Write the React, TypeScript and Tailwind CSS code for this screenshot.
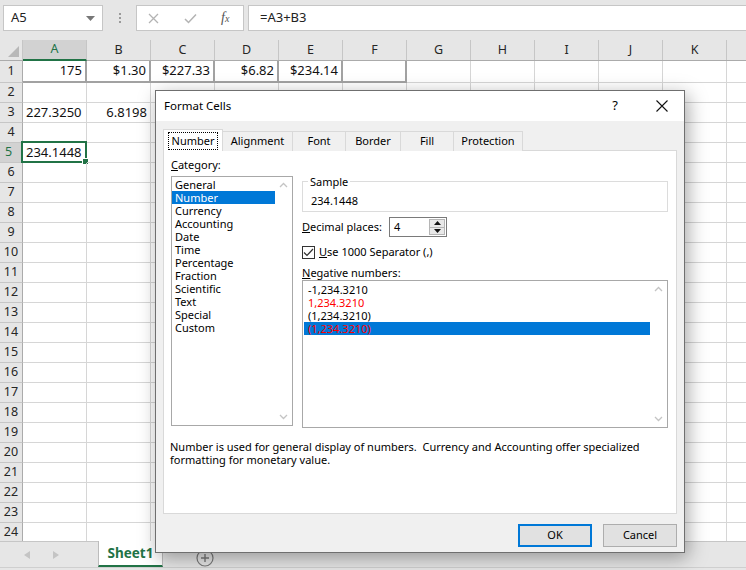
import React from "react";

const COLS = ["A", "B", "C", "D", "E", "F", "G", "H", "I", "J", "K", "L"];
const ROWS = Array.from({ length: 24 }, (_, i) => i + 1);

const cells: Record<string, { v: string; right?: boolean }> = {
  A1: { v: "175", right: true },
  B1: { v: "$1.30", right: true },
  C1: { v: "$227.33", right: true },
  D1: { v: "$6.82", right: true },
  E1: { v: "$234.14", right: true },
  A3: { v: "227.3250" },
  B3: { v: "6.8198", right: true },
  A5: { v: "234.1448" },
};

const categories = [
  "General", "Number", "Currency", "Accounting", "Date", "Time",
  "Percentage", "Fraction", "Scientific", "Text", "Special", "Custom",
];

function Chevron({ up }: { up?: boolean }) {
  return (
    <svg width="9" height="6" viewBox="0 0 9 6" className="block">
      <path d={up ? "M1 5 L4.5 1.5 L8 5" : "M1 1 L4.5 4.5 L8 1"} fill="none" stroke="#c4c4c4" strokeWidth="1.3" />
    </svg>
  );
}

function ScrollBar() {
  return (
    <div className="w-[17px] shrink-0 flex flex-col items-center justify-between py-[5px]">
      <Chevron up />
      <Chevron />
    </div>
  );
}

function FormulaBar() {
  return (
    <div className="h-[40px] bg-[#e6e6e6] flex items-start pt-[5px]">
      <div className="ml-[3px] w-[100px] h-[26px] bg-white border border-[#c6c6c6] flex items-center pl-[7px] pr-[7px] text-[13px] text-[#222]">
        A5
        <svg width="9" height="5" viewBox="0 0 9 5" className="ml-auto">
          <path d="M0 0 H9 L4.5 5 Z" fill="#777" />
        </svg>
      </div>
      <div className="w-[33px] h-[26px] flex flex-col items-center justify-center gap-[2px]">
        <span className="w-[2px] h-[2px] bg-[#9a9a9a]" />
        <span className="w-[2px] h-[2px] bg-[#9a9a9a]" />
        <span className="w-[2px] h-[2px] bg-[#9a9a9a]" />
      </div>
      <div className="w-[108px] h-[26px] bg-white border border-[#c6c6c6] flex items-center pl-[11px]">
        <svg width="11" height="11" viewBox="0 0 11 11">
          <path d="M1 1 L10 10 M10 1 L1 10" stroke="#b3b3b3" strokeWidth="1.3" />
        </svg>
        <svg width="13" height="11" viewBox="0 0 13 11" className="ml-[25px]">
          <path d="M1 6 L4.5 9.5 L12 1.5" fill="none" stroke="#b3b3b3" strokeWidth="1.5" />
        </svg>
        <span className="ml-[24px] font-['Liberation_Serif',serif] italic text-[14px] text-[#555] leading-none">
          f<span className="text-[10px]">x</span>
        </span>
      </div>
      <div className="ml-[4px] flex-1 h-[26px] bg-white border border-[#c6c6c6] border-r-0 flex items-center pl-[11px] text-[13px] text-[#222]">
        =A3+B3
      </div>
    </div>
  );
}

function HeaderRow() {
  return (
    <div className="flex h-[21px] bg-[#e6e6e6] border-b border-[#ababab] shrink-0">
      <div className="w-[23px] shrink-0 border-r border-[#c6c6c6] flex items-end justify-end pr-[3px] pb-[3px]">
        <svg width="11" height="11" viewBox="0 0 11 11">
          <path d="M11 0 V11 H0 Z" fill="#b8b8b8" />
        </svg>
      </div>
      {COLS.map((c) => (
        <div
          key={c}
          className={
            c === "A"
              ? "w-[64px] shrink-0 bg-[#d2d2d2] border-r border-[#c6c6c6] border-b-2 border-b-[#217346] -mb-px flex items-center justify-center text-[12.5px] text-[#217346]"
              : "w-[64px] shrink-0 border-r border-[#c6c6c6] flex items-center justify-center text-[12.5px] text-[#262626]"
          }
        >
          {c === "L" ? "" : c}
        </div>
      ))}
    </div>
  );
}

function SheetRow({ r }: { r: number }) {
  const first = r === 1;
  return (
    <div className={first ? "flex h-[22px] shrink-0" : "flex h-[20px] shrink-0"}>
      <div
        className={
          r === 5
            ? "w-[23px] shrink-0 bg-[#d2d2d2] border-r-2 border-r-[#217346] border-b border-b-[#c6c6c6] flex items-center pl-[5px] text-[12.5px] text-[#217346]"
            : "w-[23px] shrink-0 bg-[#e6e6e6] border-r border-r-[#ababab] border-b border-b-[#c6c6c6] flex items-center justify-center text-[12.5px] text-[#262626]"
        }
      >
        {r}
      </div>
      {COLS.map((c, i) => {
        const cell = cells[c + r];
        const boxed = first && i < 6;
        return (
          <div
            key={c}
            className={
              (boxed
                ? "border-r-2 border-b-2 border-[#a2a2a2] "
                : "border-r border-b border-[#d6d6d6] ") +
              "relative w-[64px] shrink-0 flex items-center px-[3px] text-[13px] text-[#111] whitespace-nowrap " +
              (cell?.right ? "justify-end" : "justify-start")
            }
          >
            {cell?.v}
            {c === "A" && r === 5 && (
              <div className="absolute -left-[2px] -top-[2px] -right-px -bottom-px border-2 border-[#217346]">
                <span className="absolute -right-[4px] -bottom-[4px] w-[5px] h-[5px] bg-[#217346] border border-white box-content" />
              </div>
            )}
          </div>
        );
      })}
    </div>
  );
}

function TabBar() {
  return (
    <div className="h-[29px] bg-[#e6e6e6] border-t border-[#c6c6c6] flex flex-col">
      <div className="h-[25px] flex items-stretch">
        <div className="w-[98px] flex items-center pl-[24px] gap-[23px]">
          <svg width="6" height="8" viewBox="0 0 6 8">
            <path d="M6 0 V8 L0 4 Z" fill="#c4c4c4" />
          </svg>
          <svg width="6" height="8" viewBox="0 0 6 8">
            <path d="M0 0 V8 L6 4 Z" fill="#c4c4c4" />
          </svg>
        </div>
        <div className="-mt-px w-[65px] bg-white border-x border-[#bcbcbc] border-b-2 border-b-[#217346] flex items-center justify-center font-bold text-[13.5px] text-[#217346]">
          Sheet1
        </div>
        <div className="ml-[33px] flex items-center pt-[6px]">
          <svg width="18" height="18" viewBox="0 0 18 18">
            <circle cx="9" cy="9" r="8" fill="none" stroke="#7a7a7a" strokeWidth="1.2" />
            <path d="M9 5 V13 M5 9 H13" stroke="#7a7a7a" strokeWidth="1.4" />
          </svg>
        </div>
      </div>
      <div className="flex-1 border-t border-[#cfcfcf]" />
    </div>
  );
}

function Dialog() {
  const tabs = ["Alignment", "Font", "Border", "Fill", "Protection"];
  const tabW = ["w-[71px]", "w-[54px]", "w-[56px]", "w-[54px]", "w-[70px]"];
  return (
    <div className="absolute left-[155px] top-[90px] w-[530px] h-[463px] border border-[#6f6f6f] bg-[#f0f0f0] shadow-[3px_5px_18px_rgba(0,0,0,0.35)] flex flex-col text-[11px] text-black">
      <div className="h-[30px] shrink-0 bg-white flex items-center pl-[8px] pr-[16px]">
        <span className="text-[11.5px]">Format Cells</span>
        <span className="ml-auto text-[13px] mr-[38px]">?</span>
        <svg width="12" height="12" viewBox="0 0 12 12">
          <path d="M0.5 0.5 L11.5 11.5 M11.5 0.5 L0.5 11.5" stroke="#111" strokeWidth="1.1" />
        </svg>
      </div>

      <div className="px-[7px] pt-[8px] flex flex-col">
        <div className="flex items-end h-[22px] relative z-10">
          <div className="w-[60px] h-[22px] bg-white border border-[#d9d9d9] border-b-0 flex items-start justify-center pt-[2px]">
            <span className="border border-dotted border-black px-[3px] h-[18px] flex items-center">Number</span>
          </div>
          {tabs.map((t, i) => (
            <div
              key={t}
              className={tabW[i] + " -ml-px h-[20px] border border-[#d9d9d9] border-b-0 bg-[#f0f0f0] flex items-center justify-center"}
            >
              {t}
            </div>
          ))}
        </div>

        <div className="-mt-px h-[364px] bg-white border border-[#d9d9d9] flex flex-col">
          <div className="flex pt-[6px] pl-[7px]">
            <div className="w-[122px] flex flex-col">
              <div className="h-[16px] leading-[16px]">
                <span className="underline">C</span>ategory:
              </div>
              <div className="mt-[3px] h-[250px] border border-[#a8a8a8] flex">
                <div className="flex-1 flex flex-col pt-[1px]">
                  {categories.map((c) => (
                    <div
                      key={c}
                      className={
                        c === "Number"
                          ? "h-[13px] leading-[13px] pl-[3px] bg-[#0078d7] text-white"
                          : "h-[13px] leading-[13px] pl-[3px]"
                      }
                    >
                      {c}
                    </div>
                  ))}
                </div>
                <ScrollBar />
              </div>
            </div>

            <div className="ml-[9px] w-[366px] flex flex-col pt-[18px]">
              <fieldset className="h-[37px] border border-[#dcdcdc] px-[8px]">
                <legend className="ml-[-3px] px-[2px] leading-[13px]">Sample</legend>
                <div className="leading-[14px] mt-[6px]">234.1448</div>
              </fieldset>

              <div className="mt-[5px] h-[20px] flex items-center">
                <span className="w-[87px]">
                  <span className="underline">D</span>ecimal places:
                </span>
                <div className="w-[58px] h-[20px] border border-[#7a7a7a] flex items-center pl-[4px] pr-[1px]">
                  <span>4</span>
                  <div className="ml-auto w-[16px] h-[16px] flex flex-col border border-[#b5b5b5] bg-[#e8e8e8]">
                    <div className="flex-1 flex items-center justify-center border-b border-[#b5b5b5]">
                      <svg width="7" height="4" viewBox="0 0 7 4"><path d="M0 4 H7 L3.5 0 Z" fill="#111" /></svg>
                    </div>
                    <div className="flex-1 flex items-center justify-center">
                      <svg width="7" height="4" viewBox="0 0 7 4"><path d="M0 0 H7 L3.5 4 Z" fill="#111" /></svg>
                    </div>
                  </div>
                </div>
              </div>

              <div className="mt-[8px] h-[14px] flex items-center">
                <div className="w-[13px] h-[13px] border border-[#333] bg-white flex items-center justify-center">
                  <svg width="11" height="9" viewBox="0 0 11 9">
                    <path d="M1 4.5 L4 7.5 L10 1" fill="none" stroke="#333" strokeWidth="1.2" />
                  </svg>
                </div>
                <span className="ml-[4px]">
                  <span className="underline">U</span>se 1000 Separator (,)
                </span>
              </div>

              <div className="mt-[6px] h-[15px] leading-[15px]">
                <span className="underline">N</span>egative numbers:
              </div>
              <div className="mt-[0px] h-[148px] border border-[#a8a8a8] flex">
                <div className="flex-1 flex flex-col pt-[2px] pl-[1px]">
                  <div className="h-[13px] leading-[13px] pl-[4px]">-1,234.3210</div>
                  <div className="h-[13px] leading-[13px] pl-[4px] text-[#ff0000]">1,234.3210</div>
                  <div className="h-[13px] leading-[13px] pl-[4px]">(1,234.3210)</div>
                  <div className="h-[13px] leading-[13px] pl-[4px] bg-[#0078d7] text-[#ff0000]">(1,234.3210)</div>
                </div>
                <ScrollBar />
              </div>
            </div>
          </div>

          <div className="mt-[12px] pl-[6px] leading-[13px] whitespace-pre">
            <div>Number is used for general display of numbers.  Currency and Accounting offer specialized</div>
            <div>formatting for monetary value.</div>
          </div>
        </div>

        <div className="mt-[10px] flex justify-end gap-[11px]">
          <button className="w-[74px] h-[23px] bg-[#e1e1e1] border-2 border-[#0078d7] text-[11px]">OK</button>
          <button className="w-[74px] h-[23px] bg-[#e1e1e1] border border-[#adadad] text-[11px]">Cancel</button>
        </div>
      </div>
    </div>
  );
}

export default function App() {
  return (
    <div className="relative w-[746px] h-[570px] overflow-hidden bg-white font-['Noto_Sans',sans-serif]">
      <FormulaBar />
      <div className="h-[501px] overflow-hidden flex flex-col">
        <HeaderRow />
        {ROWS.map((r) => (
          <SheetRow key={r} r={r} />
        ))}
      </div>
      <TabBar />
      <Dialog />
    </div>
  );
}
